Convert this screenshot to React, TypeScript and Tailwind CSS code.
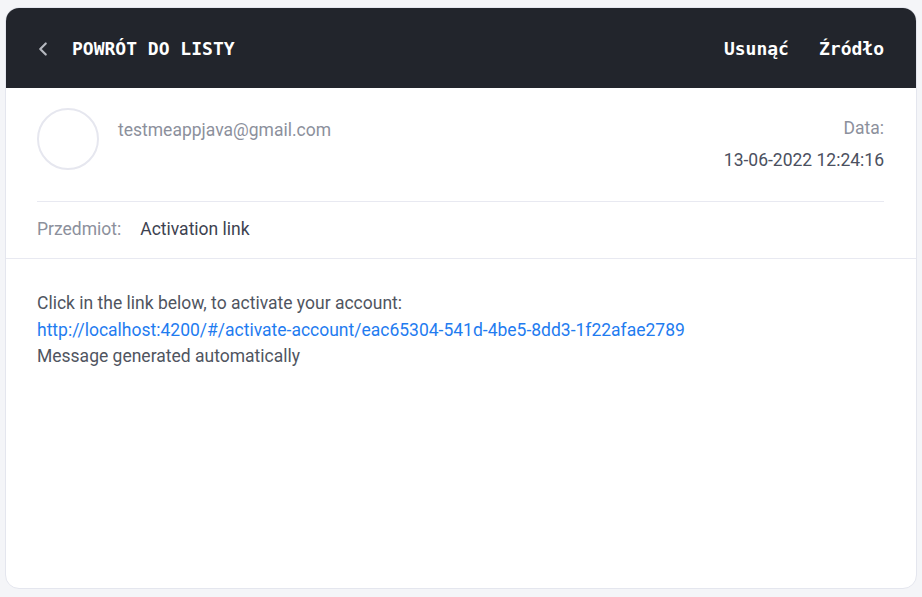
import { ChevronLeft } from 'lucide-react'

const mono = { fontFamily: '"DejaVu Sans Mono", "Liberation Mono", monospace' }

export default function App() {
  return (
    <div className="min-h-screen bg-[#f4f5f8] px-[5px] pt-[7px] pb-[8px]" style={{ fontFamily: 'Roboto, "Noto Sans", sans-serif' }}>
      <div className="h-[582px] bg-white rounded-[14px] border border-[#e4e6ee] overflow-hidden flex flex-col">
        {/* Header */}
        <div className="h-[81px] shrink-0 bg-[#22252c] flex items-center justify-between pl-[27px] pr-[33px] pt-[2px] -mx-px -mt-px">
          <button className="flex items-center gap-[18px] text-white" style={mono}>
            <ChevronLeft size={22} strokeWidth={2.4} className="text-[#b4b7be]" />
            <span className="text-[18px] font-bold">POWRÓT DO LISTY</span>
          </button>
          <div className="flex items-center gap-[30px] text-[18px] font-bold text-white" style={mono}>
            <button>Usunąć</button>
            <button>Źródło</button>
          </div>
        </div>

        {/* Sender */}
        <div className="pl-[31px] pr-[32px]">
          <div className="flex justify-between pt-[20px] pb-[29px] border-b border-[#e8e9f1]">
            <div className="flex items-start gap-[19px]">
              <div className="w-[62px] h-[62px] rounded-full border-2 border-[#e6e7ef]" />
              <div className="pt-[10px] text-[17.5px] leading-6 text-[#8c909c]">testmeappjava@gmail.com</div>
            </div>
            <div className="pt-[8px] flex flex-col items-end gap-[8px] text-[17.5px] leading-6">
              <span className="text-[#8c909c]">Data:</span>
              <span className="text-[#4b5060]">13-06-2022 12:24:16</span>
            </div>
          </div>
          <div className="flex items-center gap-[19px] pt-[15px] pb-[17px] text-[17.5px] leading-6">
            <span className="text-[#8c909c]">Przedmiot:</span>
            <span className="text-[#3d4250]">Activation link</span>
          </div>
        </div>

        {/* Body */}
        <div className="border-t border-[#e8e9f1] pl-[31px] pr-[32px] pt-[31px] text-[17.5px] leading-[26.5px] text-[#50555f]">
          <div>Click in the link below, to activate your account:</div>
          <a href="#" className="block text-[#1f7cf0]">http://localhost:4200/#/activate-account/eac65304-541d-4be5-8dd3-1f22afae2789</a>
          <div>Message generated automatically</div>
        </div>
      </div>
    </div>
  )
}
